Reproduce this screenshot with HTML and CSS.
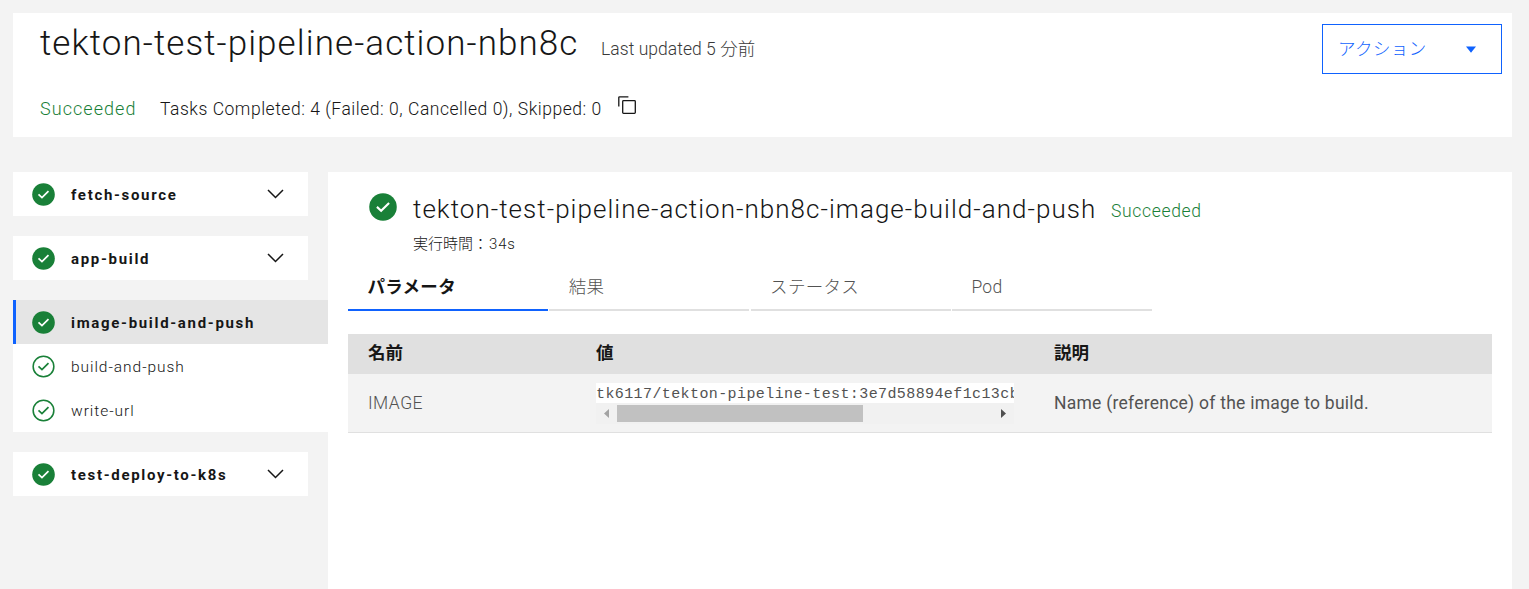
FILE: index.html
```html
<!DOCTYPE html>
<html lang="ja">
<head>
<meta charset="utf-8">
<title>tekton-test-pipeline-action-nbn8c</title>
<link rel="stylesheet" href="styles.css">
</head>
<body>
<svg class="sprite" aria-hidden="true">
  <symbol id="check-filled" viewBox="0 0 24 24"><circle cx="12" cy="12" r="11.8" fill="#198038"/><path d="M6.8 11.9l3.6 3.4 6.8-6.8" fill="none" stroke="#fff" stroke-width="1.8"/></symbol>
  <symbol id="check-outline" viewBox="0 0 24 24"><circle cx="12" cy="12" r="10.8" fill="none" stroke="#198038" stroke-width="1.6"/><path d="M6.8 11.9l3.6 3.4 6.8-6.8" fill="none" stroke="#198038" stroke-width="1.8"/></symbol>
  <symbol id="chevron" viewBox="0 0 17 10"><path d="M1 1l7.5 7.5L16 1" fill="none" stroke="#161616" stroke-width="1.5"/></symbol>
</svg>
<header class="run-header">
  <div class="title-row">
    <h1 class="run-title">tekton-test-pipeline-action-nbn8c</h1>
    <span class="updated">Last updated 5 分前</span>
  </div>
  <button class="actions"><span>アクション</span><svg class="caret" viewBox="0 0 10 7"><path d="M0 .5h10L5 6.8z" fill="#0f62fe"/></svg></button>
  <div class="status-row">
    <span class="status">Succeeded</span>
    <span class="summary">Tasks Completed: 4 (Failed: 0, Cancelled 0), Skipped: 0</span>
    <svg class="copy" viewBox="0 0 18 18"><path d="M.8 10.4V1.6q0-.8.8-.8h8.8" fill="none" stroke="#161616" stroke-width="1.3"/><rect x="4.7" y="4.7" width="12.6" height="12.6" rx=".8" fill="none" stroke="#161616" stroke-width="1.3"/></svg>
  </div>
</header>
<div class="content">
  <nav class="tasks">
    <div class="task"><svg class="dot"><use href="#check-filled"/></svg><span class="task-name">fetch-source</span><svg class="chevron"><use href="#chevron"/></svg></div>
    <div class="task"><svg class="dot"><use href="#check-filled"/></svg><span class="task-name">app-build</span><svg class="chevron"><use href="#chevron"/></svg></div>
    <div class="task-group">
      <div class="task selected"><svg class="dot"><use href="#check-filled"/></svg><span class="task-name">image-build-and-push</span></div>
      <div class="step"><svg class="dot"><use href="#check-outline"/></svg><span class="step-name">build-and-push</span></div>
      <div class="step"><svg class="dot"><use href="#check-outline"/></svg><span class="step-name">write-url</span></div>
    </div>
    <div class="task"><svg class="dot"><use href="#check-filled"/></svg><span class="task-name">test-deploy-to-k8s</span><svg class="chevron"><use href="#chevron"/></svg></div>
  </nav>
  <main class="details">
    <div class="details-head">
      <svg class="big-dot"><use href="#check-filled"/></svg>
      <h2 class="details-title">tekton-test-pipeline-action-nbn8c-image-build-and-push</h2>
      <span class="details-status">Succeeded</span>
    </div>
    <div class="duration">実行時間：<span class="time">34s</span></div>
    <div class="tabs">
      <div class="tab active">パラメータ</div>
      <div class="tab">結果</div>
      <div class="tab">ステータス</div>
      <div class="tab">Pod</div>
    </div>
    <div class="table">
      <div class="row head"><span>名前</span><span>値</span><span>説明</span></div>
      <div class="row body">
        <span class="param">IMAGE</span>
        <div class="value">
          <div class="code">tk6117/tekton-pipeline-test:3e7d58894ef1c13cb</div>
          <div class="scrollbar">
            <svg class="arrow" viewBox="0 0 5 9"><path d="M5 0v9L0 4.5z" fill="#a3a3a3"/></svg>
            <div class="thumb"></div>
            <svg class="arrow next" viewBox="0 0 5 9"><path d="M0 0v9l5-4.5z" fill="#505050"/></svg>
          </div>
        </div>
        <span class="desc">Name (reference) of the image to build.</span>
      </div>
    </div>
  </main>
</div>
</body>
</html>
```
FILE: styles.css
```css
* { box-sizing: border-box; }
body {
  margin: 0;
  height: 589px;
  overflow: hidden;
  padding: 13px 17px 0 13px;
  background: #f3f3f3;
  color: #161616;
  font-family: Roboto, "Noto Sans CJK JP", sans-serif;
  font-size: 17.5px;
  font-weight: 300;
  white-space: nowrap;
}
svg { display: block; flex: none; }
.sprite { position: absolute; width: 0; height: 0; }
h1, h2 { margin: 0; font-weight: 300; }

.run-header {
  height: 124px;
  background: #fff;
  padding: 11px 10px 0 27px;
  display: grid;
  grid-template-columns: 1fr 180px;
  grid-template-rows: 50px 1fr;
}
.title-row { display: flex; align-items: baseline; gap: 23px; line-height: 38px; height: 38px; padding-top: 1px; }
.run-title { font-size: 35px; width: 538px; letter-spacing: 1.08px; }
.updated { color: #393939; letter-spacing: .05px; }
.actions {
  display: flex;
  align-items: center;
  justify-content: space-between;
  height: 50px;
  padding: 0 25px 4px 15px;
  border: 1px solid #0f62fe;
  background: #fff;
  color: #0f62fe;
  font: inherit;
  letter-spacing: .4px;
}
.caret { width: 10px; height: 7px; margin-top: 4px; }
.status-row { display: flex; height: 24px; line-height: 24px; margin-top: 23px; }
.status { width: 120px; color: #198038; font-size: 18px; letter-spacing: 1.05px; }
.summary { width: 458px; letter-spacing: .53px; }
.copy { width: 18px; height: 18px; margin-top: -1px; }

.content { display: flex; margin-top: 35px; height: 417px; }
.tasks { width: 315px; display: flex; flex-direction: column; gap: 20px; font-size: 15px; }
.task, .step { display: flex; align-items: center; height: 44px; padding-left: 19px; background: #fff; }
.task { width: 295px; }
.task-group { background: #fff; }
.task.selected { width: 315px; padding-left: 16px; border-left: 3px solid #0f62fe; background: #e5e5e5; }
.dot { width: 23px; height: 23px; margin-right: 16px; }
.task-name { font-weight: 700; letter-spacing: 1.68px; line-height: 20px; padding-top: 2px; }
.chevron { width: 17px; height: 10px; margin: 0 24px 0 auto; }
.step-name { line-height: 20px; letter-spacing: .95px; padding-top: 2px; font-size: 15.5px; }

.details { flex: 1; background: #fff; padding: 20px 20px 0; }
.details-head { display: flex; height: 34px; align-items: center; padding-left: 21px; line-height: 34px; }
.big-dot { width: 28px; height: 28px; margin-top: -4px; }
.details-title { width: 698px; margin-left: 16px; font-size: 26px; letter-spacing: 1.03px; }
.details-status { color: #198038; padding-top: 4px; letter-spacing: .68px; }
.duration { padding-left: 65px; margin-top: 7px; height: 22px; line-height: 22px; font-size: 15px; }
.time { letter-spacing: .8px; margin-left: 1px; }
.tabs { display: flex; gap: 1.3px; margin-top: 6px; }
.tab { width: 200px; height: 50px; padding: 2px 0 0 19.5px; line-height: 48px; border-bottom: 2px solid #e0e0e0; color: #525252; letter-spacing: .3px; }
.tab.active { border-color: #0f62fe; color: #161616; font-weight: 700; }

.table { margin-top: 23px; }
.row { display: grid; grid-template-columns: 228px 458px 1fr; padding-left: 20px; align-items: center; }
.head { height: 40px; padding-bottom: 6px; background: #e0e0e0; font-weight: 700; }
.body { height: 59px; border-bottom: 1px solid #e0e0e0; background: #f3f3f3; color: #525252; }
.param { letter-spacing: .45px; }
.desc { font-weight: 400; letter-spacing: .25px; }
.value { width: 418px; }
.code {
  height: 20px;
  line-height: 23px;
  overflow: hidden;
  background: #fff;
  font-family: "Liberation Mono", monospace;
  font-size: 15px;
  font-weight: 400;
  letter-spacing: .4px;
}
.scrollbar { display: flex; align-items: center; height: 21px; padding: 0 8px; background: #f1f1f1; }
.thumb { width: 246px; height: 17px; margin-left: 8px; background: #c1c1c1; }
.arrow { width: 5px; height: 9px; }
.next { margin-left: auto; }
```
